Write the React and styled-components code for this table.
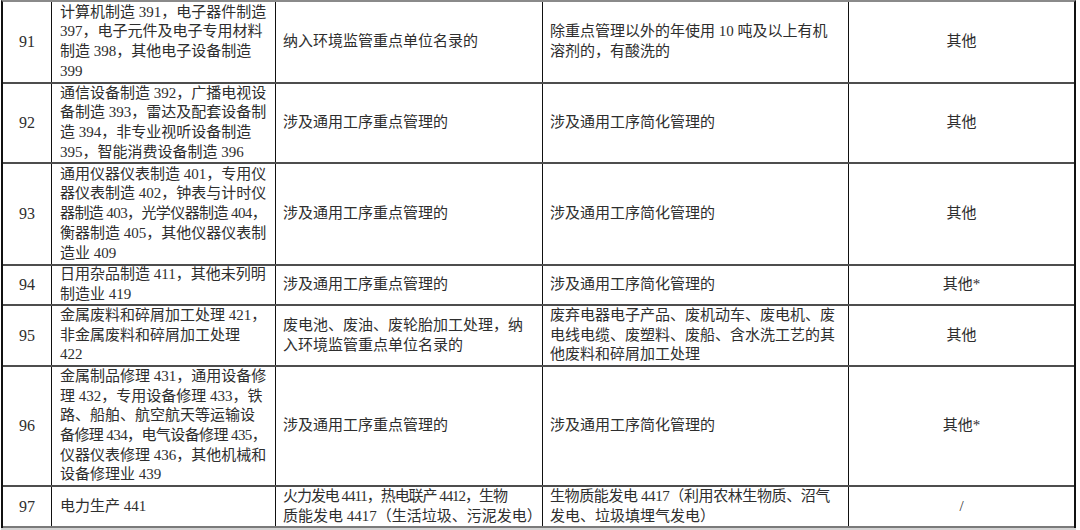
import styled, { createGlobalStyle } from "styled-components";

const GlobalStyle = createGlobalStyle`
  body {
    margin: 0;
    background: #fff;
  }
`;

const Page = styled.div`
  width: 1080px;
  height: 530px;
  overflow: hidden;
  background: #fff;
`;

const Sheet = styled.div`
  width: 1075px;
  margin-left: 1px;
  box-sizing: border-box;
  border-left: 2px solid #111;
  border-right: 2px solid #111;
  border-top: 2px solid #8a8a8a;
  font-family: "Liberation Serif", "Noto Sans CJK SC", serif;
  font-size: 15px;
  line-height: 19.7px;
  color: #2e2e2e;
  box-shadow: 0 2px 0 #d4d4d4;
`;

const Row = styled.div`
  display: grid;
  grid-template-columns: 49px 224px 267px 306px 1fr;
  height: ${(p) => p.$h}px;
  box-sizing: border-box;
  border-bottom: 2px solid ${(p) => (p.$last ? "#7a7a7a" : "#4d4d4d")};
`;

const Cell = styled.div`
  display: flex;
  flex-direction: column;
  justify-content: center;
  align-items: ${(p) => (p.$center ? "center" : "flex-start")};
  box-sizing: border-box;
  padding: 0 7px 0 ${(p) => p.$pl ?? 7}px;
  border-right: 1px solid #111;
  overflow: hidden;

  &:last-child {
    border-right: none;
  }
`;

const Num = styled(Cell)`
  font-size: 16px;
`;

const Line = styled.span`
  display: block;
  white-space: nowrap;
  letter-spacing: ${(p) => p.$tight || 0}px;
`;

// [text, letterSpacing] when a line has to be squeezed like Word does
const rows = [
  {
    no: "91",
    h: 82,
    name: [
      "计算机制造 391，电子器件制造",
      "397，电子元件及电子专用材料",
      "制造 398，其他电子设备制造",
      "399",
    ],
    key: ["纳入环境监管重点单位名录的"],
    simple: ["除重点管理以外的年使用 10 吨及以上有机", "溶剂的，有酸洗的"],
    other: "其他",
  },
  {
    no: "92",
    h: 80,
    name: [
      "通信设备制造 392，广播电视设",
      "备制造 393，雷达及配套设备制",
      "造 394，非专业视听设备制造",
      "395，智能消费设备制造 396",
    ],
    key: ["涉及通用工序重点管理的"],
    simple: ["涉及通用工序简化管理的"],
    other: "其他",
  },
  {
    no: "93",
    h: 102,
    name: [
      "通用仪器仪表制造 401，专用仪",
      "器仪表制造 402，钟表与计时仪",
      ["器制造 403，光学仪器制造 404，", -0.6],
      "衡器制造 405，其他仪器仪表制",
      "造业 409",
    ],
    key: ["涉及通用工序重点管理的"],
    simple: ["涉及通用工序简化管理的"],
    other: "其他",
  },
  {
    no: "94",
    h: 40,
    name: ["日用杂品制造 411，其他未列明", "制造业 419"],
    key: ["涉及通用工序重点管理的"],
    simple: ["涉及通用工序简化管理的"],
    other: "其他*",
  },
  {
    no: "95",
    h: 61,
    name: ["金属废料和碎屑加工处理 421，", "非金属废料和碎屑加工处理", "422"],
    key: ["废电池、废油、废轮胎加工处理，纳", "入环境监管重点单位名录的"],
    simple: [
      "废弃电器电子产品、废机动车、废电机、废",
      "电线电缆、废塑料、废船、含水洗工艺的其",
      "他废料和碎屑加工处理",
    ],
    other: "其他",
  },
  {
    no: "96",
    h: 120,
    name: [
      "金属制品修理 431，通用设备修",
      "理 432，专用设备修理 433，铁",
      "路、船舶、航空航天等运输设",
      ["备修理 434，电气设备修理 435，", -0.6],
      "仪器仪表修理 436，其他机械和",
      "设备修理业 439",
    ],
    key: ["涉及通用工序重点管理的"],
    simple: ["涉及通用工序简化管理的"],
    other: "其他*",
  },
  {
    no: "97",
    h: 41,
    name: ["电力生产 441"],
    key: [["火力发电 4411，热电联产 4412，生物", -1.05], "质能发电 4417（生活垃圾、污泥发电）"],
    simple: [["生物质能发电 4417（利用农林生物质、沼气", -0.4], "发电、垃圾填埋气发电）"],
    other: "/",
  },
];

const Lines = ({ items }) =>
  items.map((item, i) =>
    Array.isArray(item) ? (
      <Line key={i} $tight={item[1]}>
        {item[0]}
      </Line>
    ) : (
      <Line key={i}>{item}</Line>
    )
  );

export default function App() {
  return (
    <Page>
      <GlobalStyle />
      <Sheet>
        {rows.map((r, i) => (
          <Row key={r.no} $h={r.h} $last={i === rows.length - 1}>
            <Num $center>{r.no}</Num>
            <Cell $pl={8}>
              <Lines items={r.name} />
            </Cell>
            <Cell>
              <Lines items={r.key} />
            </Cell>
            <Cell>
              <Lines items={r.simple} />
            </Cell>
            <Cell $center>{r.other}</Cell>
          </Row>
        ))}
      </Sheet>
    </Page>
  );
}
